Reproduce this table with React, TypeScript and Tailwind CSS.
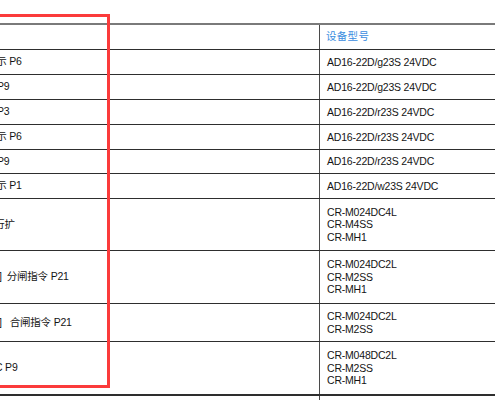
import type { ReactNode } from "react";

type Row = {
  h: string;
  left: ReactNode;
  right: string[];
};

const rows: Row[] = [
  { h: "h-[25px]", left: <span className="ml-[-14px]">指示 P6</span>, right: ["AD16-22D/g23S 24VDC"] },
  { h: "h-[25px]", left: <span className="ml-[-16px]">示 P9</span>, right: ["AD16-22D/g23S 24VDC"] },
  { h: "h-[25px]", left: <span className="ml-[-16px]">示 P3</span>, right: ["AD16-22D/r23S 24VDC"] },
  { h: "h-[25px]", left: <span className="ml-[-14px]">指示 P6</span>, right: ["AD16-22D/r23S 24VDC"] },
  { h: "h-[24px]", left: <span className="ml-[-16px]">示 P9</span>, right: ["AD16-22D/r23S 24VDC"] },
  { h: "h-[25px]", left: <span className="ml-[-14px]">指示 P1</span>, right: ["AD16-22D/w23S 24VDC"] },
  {
    h: "h-[52px]",
    left: <span className="ml-[-16px]">运行扩</span>,
    right: ["CR-M024DC4L", "CR-M4SS", "CR-MH1"],
  },
  {
    h: "h-[53px]",
    left: (
      <>
        <span className="ml-[-1px]">]</span>
        <span className="ml-[5px]">分闸指令 P21</span>
      </>
    ),
    right: ["CR-M024DC2L", "CR-M2SS", "CR-MH1"],
  },
  {
    h: "h-[38px]",
    left: (
      <>
        <span className="ml-[-1px]">]</span>
        <span className="ml-[8px]">合闸指令 P21</span>
      </>
    ),
    right: ["CR-M024DC2L", "CR-M2SS"],
  },
  {
    h: "h-[53px]",
    left: <span className="ml-[-5px]">C P9</span>,
    right: ["CR-M048DC2L", "CR-M2SS", "CR-MH1"],
  },
];

export default function App() {
  return (
    <div
      className="relative h-[400px] w-[495px] overflow-hidden bg-white pt-[23px] text-[10.5px] tracking-[-0.2px] text-[#141414]"
      style={{ fontFamily: '"Liberation Sans", "Noto Sans CJK SC", sans-serif' }}
    >
      <div className="flex flex-col">
        {/* header */}
        <div className="flex h-[26px] border-t-2 border-[#7a7a7a]">
          <div className="w-[319px] shrink-0" />
          <div className="flex flex-1 items-center border-l border-[#4a4a4a] pl-[6px] text-[#3b8de0] tracking-[0.3px]">
            设备型号
          </div>
        </div>
        {rows.map((r, i) => (
          <div key={i} className={`flex border-t border-[#2e2e2e] ${r.h}`}>
            <div className="flex w-[319px] shrink-0 items-center whitespace-nowrap">{r.left}</div>
            <div className="flex flex-1 flex-col justify-center border-l border-[#4a4a4a] pl-[7px] leading-[12.5px]">
              {r.right.map((t) => (
                <div key={t}>{t}</div>
              ))}
            </div>
          </div>
        ))}
        <div className="flex h-[10px] border-t-2 border-[#2e2e2e]">
          <div className="w-[319px] shrink-0" />
          <div className="flex-1 border-l border-[#4a4a4a]" />
        </div>
      </div>
      {/* annotation box */}
      <div className="pointer-events-none absolute left-[-10px] top-[14px] h-[374px] w-[120px] border-[3px] border-[#fb3b3b]" />
    </div>
  );
}
